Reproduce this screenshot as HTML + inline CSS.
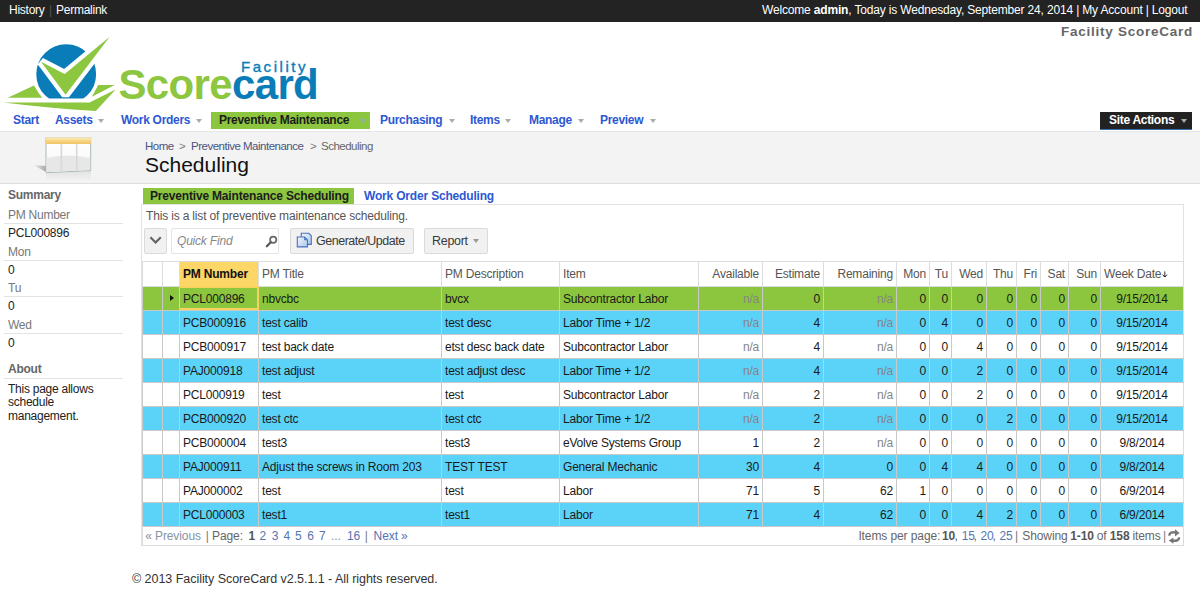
<!DOCTYPE html>
<html><head><meta charset="utf-8">
<style>
*{margin:0;padding:0;box-sizing:border-box}
html,body{width:1200px;height:590px;overflow:hidden;background:#fff;font-family:"Liberation Sans",sans-serif;font-size:12px;color:#222}
.a{position:absolute;white-space:nowrap}
#topbar{position:absolute;left:0;top:0;width:1200px;height:22px;background:#232323;color:#fff}
#topbar .t{position:absolute;top:3px;font-size:12px;line-height:14px;letter-spacing:-0.25px}
#brand{position:absolute;right:7px;top:23.5px;font-size:13.5px;font-weight:bold;color:#666;letter-spacing:0.75px}
#nav{position:absolute;left:0;top:111px;width:1200px;height:21px;border-bottom:1px solid #e2e2e2}
#nav .n{position:absolute;top:2px;font-size:12px;font-weight:bold;color:#2d58d2;line-height:14px;letter-spacing:-0.3px}
#nav .ar{position:absolute;top:8px;width:0;height:0;border-left:3px solid transparent;border-right:3px solid transparent;border-top:4px solid #aaa}
#band{position:absolute;left:0;top:131px;width:1200px;height:53px;background:#f3f3f3;box-shadow:inset 0 1px 0 #e6e6e6;border-bottom:1px solid #dedede}
#side{position:absolute;left:0;top:184px;width:130px}
#side .h{position:absolute;left:8px;font-weight:bold;color:#666;letter-spacing:-0.25px}
#side .l{position:absolute;left:8px;color:#777;letter-spacing:-0.25px}
#side .v{position:absolute;left:8px;color:#222;letter-spacing:-0.25px}
#side .ln{position:absolute;left:4px;width:119px;height:1px;background:#e3e3e3}
#tabs .tb{position:absolute;top:188px;height:16px;font-weight:bold;font-size:12px;line-height:16px;letter-spacing:-0.18px}
#panel{position:absolute;left:141px;top:204px;width:1043px;height:342px;border:1px solid #e2e2e2;border-bottom:none}
.btn{position:absolute;top:228px;height:26px;background:#f1f1f1;border:1px solid #dadada;border-radius:2px}
table{position:absolute;left:142px;top:261px;border-collapse:collapse;table-layout:fixed;width:1041px}
td,th{height:24px;color:#1a1a1a;border:1px solid #c9c9c9;padding:0 3px 0 3px;font-weight:normal;white-space:nowrap;overflow:hidden;font-size:12px;letter-spacing:-0.2px;text-align:left}
th{height:25px;color:#555;background:#fff}
td.r,th.r{text-align:right}
td.c{text-align:center}
td.na{color:#858585}
th{border-color:#dcdcdc}
td:last-child,th:last-child{border-right-color:#dedede}
tr.g td{background:#8cc63e}
tr.b td{background:#5bd3f8}
#pager{position:absolute;left:142px;top:526px;width:1042px;height:20px;border:1px solid #dcdcdc;border-top:none}
#pg span{letter-spacing:-0.1px}
#footer{position:absolute;left:132px;top:571.5px;font-size:12.5px;color:#333;letter-spacing:-0.04px;white-space:nowrap}
</style></head><body>
<div id="topbar">
 <span class="t" style="left:9px">History</span>
 <span class="t" style="left:49px;color:#555">|</span>
 <span class="t" style="left:56px">Permalink</span>
 <span class="t" style="left:762px;letter-spacing:-0.17px">Welcome <b>admin</b>, Today is Wednesday, September 24, 2014 | My Account | Logout</span>
</div>
<div id="brand">Facility ScoreCard</div>

<svg style="position:absolute;left:0;top:30px" width="330" height="86" viewBox="0 30 330 86">
 <polygon points="7.8,97.7 33.9,85.4 42.2,97.7" fill="#8dc63f"/>
 <polygon points="97.9,84.9 114.6,84.9 91.7,96.9" fill="#8dc63f"/>
 <circle cx="66.2" cy="74.2" r="31.6" fill="#0a7db8" stroke="#fff" stroke-width="3.4"/>
 <polygon points="41,61.8 64.7,74.1 109.7,36.8 65.6,94.8" fill="#8dc63f" stroke="#fff" stroke-width="8.5" stroke-linejoin="miter" stroke-miterlimit="1.5" paint-order="stroke"/>
 <path d="M3.6,102.6 L89.6,102.6 L115.6,89.6 L95.8,110.9 Q50,108.5 3.6,102.6 Z" fill="#8dc63f" stroke="#fff" stroke-width="8" paint-order="stroke" stroke-linejoin="round"/>
 <text x="118.5" y="98.5" font-family="Liberation Sans" font-weight="bold" font-size="42" letter-spacing="-0.65"><tspan fill="#8dc63f">Score</tspan><tspan fill="#0a7db8">card</tspan></text>
 <text x="241" y="72" font-family="Liberation Sans" font-size="15" letter-spacing="2.55" fill="#0a7db8" stroke="#0a7db8" stroke-width="0.35">Facility</text>
</svg>

<div id="nav">
 <span class="n" style="left:13px">Start</span>
 <span class="n" style="left:55px">Assets</span><span class="ar" style="left:98px"></span>
 <span class="n" style="left:121px">Work Orders</span><span class="ar" style="left:196px"></span>
 <div style="position:absolute;left:211px;top:1px;width:159px;height:17px;background:#8cc63f"></div>
 <span class="n" style="left:219px;color:#1c1c1c">Preventive Maintenance</span><span class="ar" style="left:360px;border-top-color:#9aa"></span>
 <span class="n" style="left:380px">Purchasing</span><span class="ar" style="left:449px"></span>
 <span class="n" style="left:470px">Items</span><span class="ar" style="left:505px"></span>
 <span class="n" style="left:529px">Manage</span><span class="ar" style="left:578px"></span>
 <span class="n" style="left:600px">Preview</span><span class="ar" style="left:650px"></span>
 <div style="position:absolute;left:1100px;top:1px;width:92px;height:18px;background:#222;border-bottom:1px solid #3a6fb0"></div>
 <span class="n" style="left:1109px;color:#fff">Site Actions</span><span class="ar" style="left:1181px;border-top-color:#aaa"></span>
</div>

<div id="band">
 <svg style="position:absolute;left:25px;top:1px" width="75" height="51" viewBox="25 132 75 51">
  <defs>
   <linearGradient id="sh" x1="0" y1="0" x2="1" y2="0"><stop offset="0" stop-color="#f2f2f2"/><stop offset="1" stop-color="#a9a9a9"/></linearGradient>
   <linearGradient id="hd" x1="0" y1="0" x2="0" y2="1"><stop offset="0" stop-color="#fdf0c2"/><stop offset="0.6" stop-color="#f5d27e"/><stop offset="1" stop-color="#eec468"/></linearGradient>
   <linearGradient id="bd" x1="0" y1="0" x2="0" y2="1"><stop offset="0" stop-color="#ffffff"/><stop offset="1" stop-color="#f7f7f7"/></linearGradient>
   <linearGradient id="rf" x1="0" y1="0" x2="0" y2="1"><stop offset="0" stop-color="#dcdcdc"/><stop offset="1" stop-color="#f2f2f2"/></linearGradient>
  </defs>
  <polygon points="33,165 46,166 46,172" fill="url(#sh)"/>
  <polygon points="46,173 91,171 91,180 46,181" fill="url(#rf)" opacity="0.7"/>
  <polygon points="46,137.5 90.7,137.5 90.7,170.6 46,172.7" fill="url(#bd)" stroke="#a9b9b5" stroke-width="1"/>
  <path d="M46.5,158 Q68,153 90.2,158 L90.2,170.1 L46.5,172.2 Z" fill="#e7e7e7"/>
  <rect x="45.8" y="137.2" width="45.2" height="6.8" rx="1.2" fill="url(#hd)"/>
  <line x1="61.4" y1="144" x2="61.4" y2="171.8" stroke="#d3dad8" stroke-width="1.6"/>
  <line x1="76.7" y1="144" x2="76.7" y2="171.1" stroke="#d3dad8" stroke-width="1.6"/>
 </svg>
 <div class="a" style="left:145px;top:8.5px;font-size:11.5px;letter-spacing:-0.5px;color:#4a5580">Home</div>
 <div class="a" style="left:179px;top:8.5px;font-size:11.5px;color:#777">&gt;</div>
 <div class="a" style="left:191px;top:8.5px;font-size:11.5px;letter-spacing:-0.5px;color:#4a5580">Preventive Maintenance</div>
 <div class="a" style="left:310px;top:8.5px;font-size:11.5px;color:#777">&gt;</div>
 <div class="a" style="left:321px;top:8.5px;font-size:11.5px;letter-spacing:-0.5px;color:#666">Scheduling</div>
 <div class="a" style="left:145px;top:21.5px;font-size:21px;color:#111">Scheduling</div>
</div>

<div id="side">
 <div class="h" style="top:4px">Summary</div>
 <div class="l" style="top:24px">PM Number</div>
 <div class="ln" style="top:39px"></div>
 <div class="v" style="top:42px">PCL000896</div>
 <div class="l" style="top:61px">Mon</div>
 <div class="ln" style="top:76px"></div>
 <div class="v" style="top:79px">0</div>
 <div class="l" style="top:97px">Tu</div>
 <div class="ln" style="top:112px"></div>
 <div class="v" style="top:115px">0</div>
 <div class="l" style="top:134px">Wed</div>
 <div class="ln" style="top:149px"></div>
 <div class="v" style="top:152px">0</div>
 <div class="h" style="top:178px">About</div>
 <div class="ln" style="top:194px"></div>
 <div class="v" style="top:198.5px;line-height:13.5px;white-space:normal;width:100px">This page allows schedule management.</div>
</div>

<div id="tabs">
 <div class="tb" style="left:143px;width:211px;background:#8cc63f;color:#1c1c1c;padding-left:7px">Preventive Maintenance Scheduling</div>
 <div class="tb" style="left:364px;color:#2d58d2">Work Order Scheduling</div>
</div>
<div id="panel"></div>
<div class="a" style="left:146px;top:208.5px;color:#555;letter-spacing:-0.17px">This is a list of preventive maintenance scheduling.</div>

<div class="btn" style="left:144px;width:23px"></div>
<svg style="position:absolute;left:148px;top:234px" width="16" height="12" viewBox="148 234 16 12"><polyline points="150.4,237.3 155.6,242.6 160.8,237.3" fill="none" stroke="#626262" stroke-width="2.1"/></svg>
<div class="btn" style="left:171px;width:108px;background:#fff;border-color:#e4e4e4"></div>
<div class="a" style="left:177px;top:234px;font-style:italic;color:#888;letter-spacing:-0.2px;font-size:12px">Quick Find</div>
<svg style="position:absolute;left:264px;top:234px" width="16" height="16" viewBox="264 234 16 16"><circle cx="273.2" cy="239.8" r="3.1" fill="none" stroke="#666" stroke-width="1.7"/><line x1="270.8" y1="242.3" x2="266.8" y2="246.3" stroke="#555" stroke-width="2.2" stroke-linecap="round"/></svg>
<div class="btn" style="left:290px;width:124px"></div>
<svg style="position:absolute;left:295px;top:231px" width="20" height="18" viewBox="295 231 20 18">
 <defs><linearGradient id="dg" x1="0" y1="0" x2="1" y2="1"><stop offset="0" stop-color="#f4f8ff"/><stop offset="1" stop-color="#a9c4ea"/></linearGradient></defs>
 <path d="M301.3,233.3 L308.8,233.3 L311.3,235.8 L311.3,244.4 L301.3,244.4 Z" fill="url(#dg)" stroke="#4b72bb" stroke-width="1.1"/>
 <path d="M297.3,237 L304.6,237 L307.5,239.9 L307.5,246.9 L297.3,246.9 Z" fill="url(#dg)" stroke="#4b72bb" stroke-width="1.1"/>
 <path d="M304.6,237 L304.6,239.9 L307.5,239.9" fill="#5c84c8" stroke="#4b72bb" stroke-width="0.8"/>
</svg>
<div class="a" style="left:316px;top:234px;color:#3a3a3a;font-size:12.5px;letter-spacing:-0.48px">Generate/Update</div>
<div class="btn" style="left:424px;width:64px"></div>
<div class="a" style="left:432px;top:234px;color:#3a3a3a;font-size:12.5px;letter-spacing:-0.3px">Report</div>
<div style="position:absolute;left:473px;top:239px;width:0;height:0;border-left:3px solid transparent;border-right:3px solid transparent;border-top:4px solid #999"></div>

<table>
<colgroup>
<col style="width:20px"><col style="width:17px"><col style="width:79px"><col style="width:183px"><col style="width:118px"><col style="width:139px"><col style="width:64px"><col style="width:61px"><col style="width:73px"><col style="width:33px"><col style="width:22px"><col style="width:35px"><col style="width:30px"><col style="width:24px"><col style="width:28px"><col style="width:32px"><col style="width:83px">
</colgroup>
<tr><th></th><th></th><th style="background:#fcd667;color:#111;font-weight:bold">PM Number</th><th>PM Title</th><th>PM Description</th><th>Item</th><th class="r">Available</th><th class="r">Estimate</th><th class="r">Remaining</th><th class="r">Mon</th><th class="r">Tu</th><th class="r">Wed</th><th class="r">Thu</th><th class="r">Fri</th><th class="r">Sat</th><th class="r">Sun</th><th>Week Date<svg width="5.6" height="7.2" style="vertical-align:-0.5px;margin-left:1px" viewBox="0 0 7 9"><line x1="3.5" y1="0.5" x2="3.5" y2="7.5" stroke="#111" stroke-width="1.1"/><polyline points="0.8,4.6 3.5,7.6 6.2,4.6" fill="none" stroke="#111" stroke-width="1.2"/></svg></th></tr>
<tr class="g"><td></td><td></td><td>PCL000896</td><td>nbvcbc</td><td>bvcx</td><td>Subcontractor Labor</td><td class="r na">n/a</td><td class="r">0</td><td class="r na">n/a</td><td class="r">0</td><td class="r">0</td><td class="r">0</td><td class="r">0</td><td class="r">0</td><td class="r">0</td><td class="r">0</td><td class="c">9/15/2014</td></tr>
<tr class="b"><td></td><td></td><td>PCB000916</td><td>test calib</td><td>test desc</td><td>Labor Time + 1/2</td><td class="r na">n/a</td><td class="r">4</td><td class="r na">n/a</td><td class="r">0</td><td class="r">4</td><td class="r">0</td><td class="r">0</td><td class="r">0</td><td class="r">0</td><td class="r">0</td><td class="c">9/15/2014</td></tr>
<tr><td></td><td></td><td>PCB000917</td><td>test back date</td><td>etst desc back date</td><td>Subcontractor Labor</td><td class="r na">n/a</td><td class="r">4</td><td class="r na">n/a</td><td class="r">0</td><td class="r">0</td><td class="r">4</td><td class="r">0</td><td class="r">0</td><td class="r">0</td><td class="r">0</td><td class="c">9/15/2014</td></tr>
<tr class="b"><td></td><td></td><td>PAJ000918</td><td>test adjust</td><td>test adjust desc</td><td>Labor Time + 1/2</td><td class="r na">n/a</td><td class="r">4</td><td class="r na">n/a</td><td class="r">0</td><td class="r">0</td><td class="r">2</td><td class="r">0</td><td class="r">0</td><td class="r">0</td><td class="r">0</td><td class="c">9/15/2014</td></tr>
<tr><td></td><td></td><td>PCL000919</td><td>test</td><td>test</td><td>Subcontractor Labor</td><td class="r na">n/a</td><td class="r">2</td><td class="r na">n/a</td><td class="r">0</td><td class="r">0</td><td class="r">2</td><td class="r">0</td><td class="r">0</td><td class="r">0</td><td class="r">0</td><td class="c">9/15/2014</td></tr>
<tr class="b"><td></td><td></td><td>PCB000920</td><td>test ctc</td><td>test ctc</td><td>Labor Time + 1/2</td><td class="r na">n/a</td><td class="r">2</td><td class="r na">n/a</td><td class="r">0</td><td class="r">0</td><td class="r">0</td><td class="r">2</td><td class="r">0</td><td class="r">0</td><td class="r">0</td><td class="c">9/15/2014</td></tr>
<tr><td></td><td></td><td>PCB000004</td><td>test3</td><td>test3</td><td>eVolve Systems Group</td><td class="r">1</td><td class="r">2</td><td class="r na">n/a</td><td class="r">0</td><td class="r">0</td><td class="r">0</td><td class="r">0</td><td class="r">0</td><td class="r">0</td><td class="r">0</td><td class="c">9/8/2014</td></tr>
<tr class="b"><td></td><td></td><td>PAJ000911</td><td>Adjust the screws in Room 203</td><td>TEST TEST</td><td>General Mechanic</td><td class="r">30</td><td class="r">4</td><td class="r">0</td><td class="r">0</td><td class="r">4</td><td class="r">4</td><td class="r">0</td><td class="r">0</td><td class="r">0</td><td class="r">0</td><td class="c">9/8/2014</td></tr>
<tr><td></td><td></td><td>PAJ000002</td><td>test</td><td>test</td><td>Labor</td><td class="r">71</td><td class="r">5</td><td class="r">62</td><td class="r">1</td><td class="r">0</td><td class="r">0</td><td class="r">0</td><td class="r">0</td><td class="r">0</td><td class="r">0</td><td class="c">6/9/2014</td></tr>
<tr class="b"><td></td><td></td><td>PCL000003</td><td>test1</td><td>test1</td><td>Labor</td><td class="r">71</td><td class="r">4</td><td class="r">62</td><td class="r">0</td><td class="r">0</td><td class="r">4</td><td class="r">2</td><td class="r">0</td><td class="r">0</td><td class="r">0</td><td class="c">6/9/2014</td></tr>
</table>

<div style="position:absolute;left:170px;top:294.5px;width:0;height:0;border-top:3.2px solid transparent;border-bottom:3.2px solid transparent;border-left:4px solid #111"></div>
<div style="position:absolute;left:179px;top:286px;width:80px;height:24px;border:2px solid #f8d25e;border-left-width:1.6px"></div>
<div id="pager"></div>
<div id="pg">
 <span class="a" style="left:145.2px;top:529px;color:#8593a3;">« Previous</span>
 <span class="a" style="left:205.8px;top:529px;color:#7a7a7a;">|</span>
 <span class="a" style="left:212.0px;top:529px;color:#666;">Page:</span>
 <span class="a" style="left:248.5px;top:529px;color:#555;font-weight:bold;">1</span>
 <span class="a" style="left:259.6px;top:529px;color:#5574b2;">2</span>
 <span class="a" style="left:271.8px;top:529px;color:#5574b2;">3</span>
 <span class="a" style="left:283.4px;top:529px;color:#5574b2;">4</span>
 <span class="a" style="left:295.1px;top:529px;color:#5574b2;">5</span>
 <span class="a" style="left:307.3px;top:529px;color:#5574b2;">6</span>
 <span class="a" style="left:319.0px;top:529px;color:#5574b2;">7</span>
 <span class="a" style="left:331.0px;top:529px;color:#8593a3;">...</span>
 <span class="a" style="left:347.0px;top:529px;color:#5574b2;">16</span>
 <span class="a" style="left:364.8px;top:529px;color:#7a7a7a;">|</span>
 <span class="a" style="left:373.6px;top:529px;color:#5574b2;">Next »</span>
 <span class="a" style="left:858.4px;top:529px;color:#666;">Items per page:</span>
 <span class="a" style="left:942.0px;top:529px;color:#555;font-weight:bold;">10</span>
 <span class="a" style="left:954.5px;top:529px;color:#666;">,</span>
 <span class="a" style="left:961.8px;top:529px;color:#5574b2;">15</span>
 <span class="a" style="left:973.5px;top:529px;color:#666;">,</span>
 <span class="a" style="left:980.4px;top:529px;color:#5574b2;">20</span>
 <span class="a" style="left:992.5px;top:529px;color:#666;">,</span>
 <span class="a" style="left:999.4px;top:529px;color:#5574b2;">25</span>
 <span class="a" style="left:1015.0px;top:529px;color:#7a7a7a;">|</span>
 <span class="a" style="left:1022.3px;top:529px;color:#666;">Showing</span>
 <span class="a" style="left:1070.3px;top:529px;color:#555;font-weight:bold;">1-10</span>
 <span class="a" style="left:1096.8px;top:529px;color:#666;">of</span>
 <span class="a" style="left:1109.8px;top:529px;color:#555;font-weight:bold;">158</span>
 <span class="a" style="left:1132.5px;top:529px;color:#666;">items</span>
 <span class="a" style="left:1163.0px;top:529px;color:#7a7a7a;">|</span>
</div>
<svg style="position:absolute;left:1166px;top:528px" width="16" height="17" viewBox="1166 528 16 17">
 <path d="M1169.2,535.6 C1169.6,532.6 1172,531.9 1175.6,532.4" fill="none" stroke="#777" stroke-width="2.5"/>
 <polygon points="1175,529.2 1179.6,533 1175,536.4" fill="#777"/>
 <path d="M1179.2,537.4 C1178.8,540.4 1176.4,541.2 1172.8,540.7" fill="none" stroke="#777" stroke-width="2.5"/>
 <polygon points="1173.4,537.4 1168.8,540.6 1173.4,543.8" fill="#777"/>
</svg>

<div id="footer">© 2013 Facility ScoreCard v2.5.1.1 - All rights reserved.</div>
</body></html>
